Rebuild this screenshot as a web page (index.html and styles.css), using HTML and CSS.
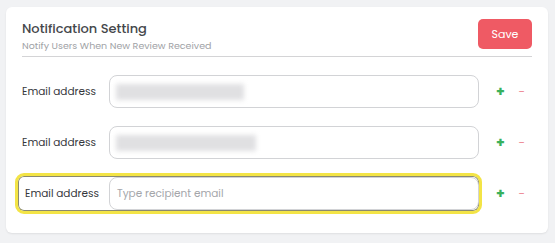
FILE: index.html
```html
<!DOCTYPE html>
<html>
<head>
<meta charset="utf-8">
<link rel="stylesheet" href="styles.css">
</head>
<body>
<div class="card">
  <div class="header">
    <div class="titles">
      <div class="title">Notification Setting</div>
      <div class="subtitle">Notify Users When New Review Received</div>
    </div>
    <button class="save">Save</button>
  </div>
  <div class="rows">
    <div class="row">
      <div class="field">
        <label class="label">Email address</label>
        <div class="input"><span class="blur" style="width:128px"></span></div>
      </div>
      <div class="actions"><span class="plus">+</span><span class="minus">−</span></div>
    </div>
    <div class="row">
      <div class="field">
        <label class="label">Email address</label>
        <div class="input"><span class="blur" style="width:140px"></span></div>
      </div>
      <div class="actions"><span class="plus">+</span><span class="minus">−</span></div>
    </div>
    <div class="row">
      <div class="field hl">
        <label class="label">Email address</label>
        <div class="input"><span class="placeholder">Type recipient email</span></div>
      </div>
      <div class="actions"><span class="plus">+</span><span class="minus">−</span></div>
    </div>
  </div>
</div>
</body>
</html>
```
FILE: styles.css
```css
* { box-sizing: border-box; }
html, body { margin: 0; padding: 0; }
body {
  background: #f1f2f4;
  font-family: "Poppins", "Inter", "Liberation Sans", sans-serif;
  width: 555px;
  height: 243px;
  padding: 7px 7px 10px 6px;
}
.card {
  background: #ffffff;
  border-radius: 6px;
  box-shadow: 0 1px 2px rgba(0,0,0,0.08);
  padding: 12px 16px 23px 16px;
  height: 226px;
}
.header {
  display: flex;
  justify-content: space-between;
  align-items: flex-start;
  border-bottom: 1px solid #d4d4d6;
  height: 38px;
}
.titles { padding-top: 1px; }
.title {
  font-size: 13px;
  color: #45474b;
  font-weight: 500;
  line-height: 17px;
}
.subtitle {
  font-size: 9.5px;
  color: #a0a2a6;
  line-height: 13px;
  margin-top: 2px;
}
.save {
  border: none;
  background: #ef5a64;
  color: #fff;
  font-family: inherit;
  font-size: 11px;
  width: 54px;
  height: 30px;
  border-radius: 5px;
  padding: 0;
}
.rows {
  display: flex;
  flex-direction: column;
  gap: 18px;
  padding-top: 18px;
}
.row {
  display: flex;
  align-items: center;
  height: 33px;
}
.field {
  display: flex;
  align-items: center;
  height: 33px;
  width: 457px;
}
.field.hl {
  height: 41px;
  width: 467px;
  margin: -4px -3px -4px -7px;
  padding: 0 3px 0 7px;
  border-radius: 9px;
  border: 3px solid #f3e446;
  box-shadow: inset 0 0 0 1px #8a8a70;
}
.label {
  width: 87px;
  flex: none;
  font-size: 10.5px;
  color: #35373b;
}
.field.hl .label { width: 84px; }
.input {
  flex: none;
  width: 370px;
  height: 33px;
  border: 1px solid #d2d3d6;
  border-radius: 8px;
  display: flex;
  align-items: center;
  padding-left: 6px;
}
.field.hl .input { margin-right: -3px; }
.blur {
  display: block;
  height: 16px;
  background: #e0e0e2;
  filter: blur(2.5px);
}
.placeholder {
  font-size: 10.5px;
  color: #a4a6aa;
  padding-left: 1px;
}
.actions {
  display: flex;
  align-items: center;
  gap: 12px;
  margin-left: 17px;
}
.plus {
  color: #39b15c;
  font-size: 14px;
  font-weight: 700;
  width: 9px;
  text-align: center;
}
.minus {
  color: #ee8e9a;
  font-size: 12px;
  width: 9px;
  text-align: center;
}
```
